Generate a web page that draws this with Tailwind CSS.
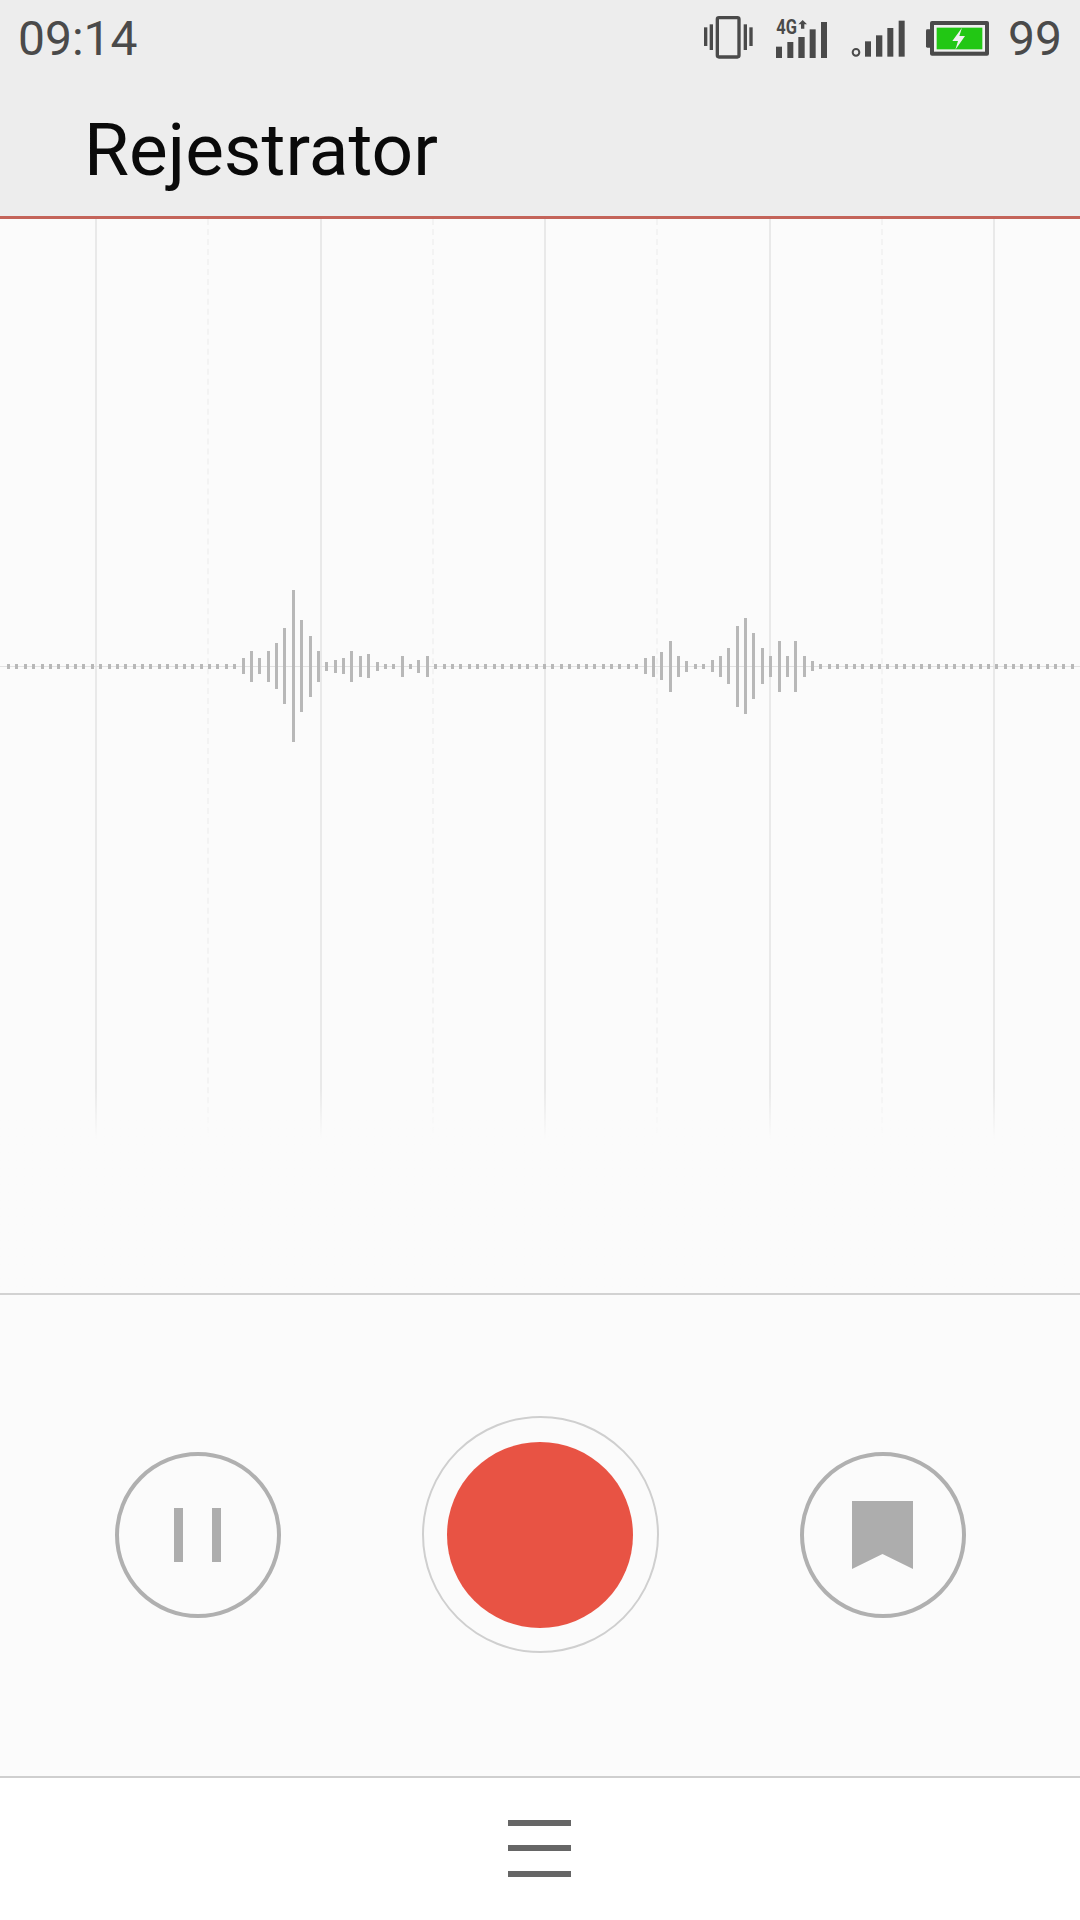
<!DOCTYPE html>
<html lang="en">
<head>
    <meta charset="UTF-8">
    <meta name="viewport" content="width=device-width, initial-scale=1.0">
    <title>Rejestrator</title>
    <script src="https://cdn.jsdelivr.net/npm/@tailwindcss/browser@4"></script>
</head>
<body class="bg-white font-['Roboto',sans-serif]">
    <div class="flex flex-col w-[1080px] h-[1920px] overflow-hidden">

        <!-- Status bar and title -->
        <header class="h-[219px] shrink-0 bg-[#ededed] border-b-[3px] border-[#c4645a] flex flex-col">
            <div class="h-[76px] flex items-center justify-between pl-[18px] pr-[18px] text-[#4a4a4a] text-[48px] leading-none">
                <span class="mt-[2px]">09:14</span>
                <div class="flex items-center">
                    <svg class="w-[49px] h-[44px] mr-[23px]" viewBox="130 48 147 132" fill="#4a4a4a">
                        <rect x="170" y="53" width="65" height="118" rx="5" fill="none" stroke="#4a4a4a" stroke-width="10"/>
                        <rect x="130" y="82" width="10" height="56"/>
                        <rect x="147" y="73" width="10" height="77"/>
                        <rect x="249" y="73" width="10" height="77"/>
                        <rect x="266" y="82" width="10" height="56"/>
                    </svg>
                    <svg class="w-[52px] h-[40px] mr-[23px] overflow-visible" viewBox="347 46 156 120" fill="#4a4a4a">
                        <text x="348" y="95" font-family="Roboto" font-weight="700" font-size="62" textLength="62" lengthAdjust="spacingAndGlyphs">4G</text>
                        <path d="M427 52l13 13h-8v13h-10v-13h-8z"/>
                        <rect x="347" y="132" width="18" height="34"/>
                        <rect x="381" y="118" width="18" height="48"/>
                        <rect x="414" y="103" width="19" height="63"/>
                        <rect x="448" y="80" width="18" height="86"/>
                        <rect x="482" y="58" width="18" height="108"/>
                    </svg>
                    <svg class="w-[54px] h-[37px] mr-[21px]" viewBox="570 56 162 111" fill="#4a4a4a">
                        <circle cx="585" cy="153" r="10" fill="none" stroke="#4a4a4a" stroke-width="6"/>
                        <rect x="612" y="120" width="18" height="46"/>
                        <rect x="645" y="102" width="19" height="64"/>
                        <rect x="679" y="80" width="18" height="86"/>
                        <rect x="713" y="58" width="18" height="108"/>
                    </svg>
                    <svg class="w-[63px] h-[35px] mr-[19px]" viewBox="795 60 189 105">
                        <rect x="795" y="85" width="16" height="55" rx="4" fill="#4a4a4a"/>
                        <rect x="807" y="60" width="177" height="104" rx="6" fill="#4a4a4a"/>
                        <rect x="819" y="72" width="153" height="80" fill="#f1f1f1"/>
                        <rect x="827" y="80" width="137" height="65" fill="#22c714"/>
                        <path d="M903 80l-29 40h17l-8 26 29-41h-17z" fill="#f1f1f1"/>
                    </svg>
                    <span class="mt-[2px]">99</span>
                </div>
            </div>
            <h1 class="pl-[84px] mt-[32px] text-[73px] leading-[84px] text-[#0a0a0a]">Rejestrator</h1>
        </header>

        <!-- Waveform -->
        <section class="relative h-[1074px] shrink-0 bg-[#fbfbfb]">
            <div class="absolute inset-0 flex pl-[95px]">
                <div class="w-[112.3px] shrink-0 border-l-2 border-[#e9e9e9]"></div>
                <div class="w-[112.3px] shrink-0 border-l-2 border-dashed border-[#f3f3f3]"></div>
                <div class="w-[112.3px] shrink-0 border-l-2 border-[#e9e9e9]"></div>
                <div class="w-[112.3px] shrink-0 border-l-2 border-dashed border-[#f3f3f3]"></div>
                <div class="w-[112.3px] shrink-0 border-l-2 border-[#e9e9e9]"></div>
                <div class="w-[112.3px] shrink-0 border-l-2 border-dashed border-[#f3f3f3]"></div>
                <div class="w-[112.3px] shrink-0 border-l-2 border-[#e9e9e9]"></div>
                <div class="w-[112.3px] shrink-0 border-l-2 border-dashed border-[#f3f3f3]"></div>
                <div class="w-[112.3px] shrink-0 border-l-2 border-[#e9e9e9]"></div>
            </div>
            <div class="absolute left-0 right-0 bottom-0 h-[205px] bg-gradient-to-b from-transparent to-[#fbfbfb] to-[25%]"></div>
            <div class="absolute left-0 right-0 top-[447px] h-px bg-[#e2e2e2]"></div>
            <div id="wave" class="absolute left-[7px] top-[347px] h-[200px] flex items-center"></div>
        </section>

        <!-- Controls -->
        <section class="h-[483px] shrink-0 bg-[#fbfbfb] border-t-2 border-[#d2d2d2] flex items-center justify-center gap-[141px] pb-[2px]">
            <button class="w-[166px] h-[166px] rounded-full border-4 border-[#b0b0b0] flex items-center justify-center gap-[29px]">
                <span class="w-[9px] h-[54px] bg-[#adadad]"></span>
                <span class="w-[9px] h-[54px] bg-[#adadad]"></span>
            </button>
            <button class="w-[237px] h-[237px] rounded-full border-[2.500px] border-[#cfcfcf] flex items-center justify-center">
                <span class="w-[186px] h-[186px] rounded-full bg-[#e85344]"></span>
            </button>
            <button class="w-[166px] h-[166px] rounded-full border-4 border-[#b0b0b0] flex items-center justify-center">
                <svg class="w-[61px] h-[68px]" viewBox="0 0 61 68" fill="#adadad">
                    <path d="M0 0h61v68l-30.500-15L0 68z"/>
                </svg>
            </button>
        </section>

        <!-- Bottom menu -->
        <nav class="flex-1 bg-white border-t-2 border-[#cfcfcf] flex flex-col items-center justify-center gap-[19.500px] pb-[2px] pr-[2px]">
            <span class="w-[63px] h-[6px] bg-[#666666]"></span>
            <span class="w-[63px] h-[6px] bg-[#666666]"></span>
            <span class="w-[63px] h-[6px] bg-[#666666]"></span>
        </nav>
    </div>

    <script>
        // Bar heights by position; anything not listed is a small dot
        const heights = {
            29: 16, 30: 31, 31: 16, 32: 31, 33: 46, 34: 76, 35: 152, 36: 92, 37: 61, 38: 31,
            39: 9, 40: 13, 41: 16, 42: 31, 43: 21, 44: 24, 45: 9, 48: 21, 50: 13, 51: 21,
            77: 16, 78: 21, 79: 28, 80: 51, 81: 21, 82: 11, 85: 12, 86: 21, 87: 36, 88: 81,
            89: 96, 90: 66, 91: 36, 92: 21, 93: 51, 94: 21, 95: 51, 96: 21, 97: 10
        };
        const wave = document.getElementById('wave');
        for (let n = 1; n <= 128; n++) {
            const bar = document.createElement('div');
            bar.className = 'w-[3px] mr-[5.380px] shrink-0 bg-[#b8b8b8]';
            bar.style.height = (heights[n] || 5) + 'px';
            wave.appendChild(bar);
        }
    </script>
</body>
</html>
